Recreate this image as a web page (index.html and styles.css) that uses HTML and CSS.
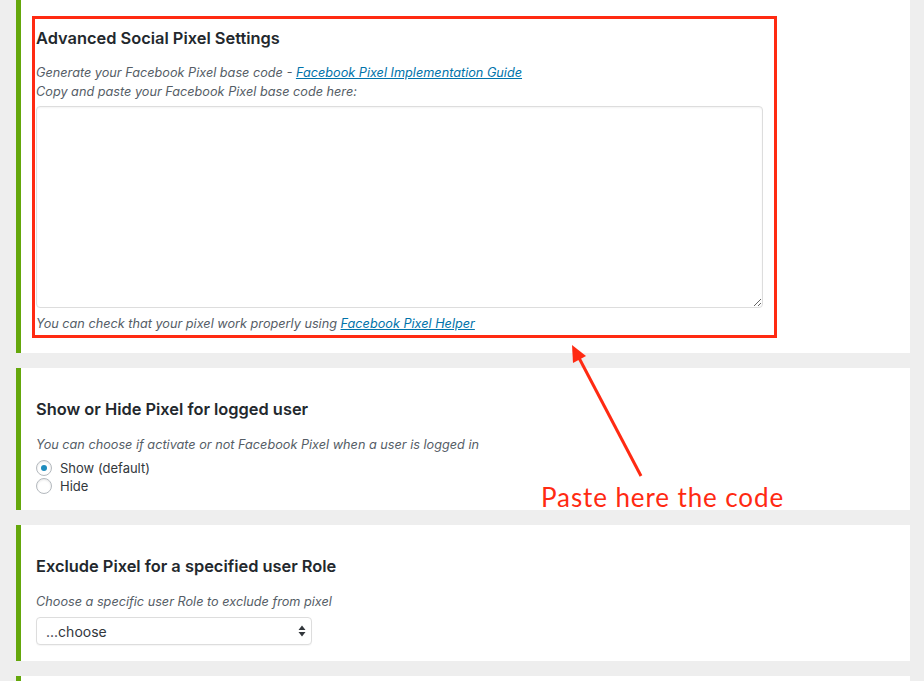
FILE: index.html
```html
<!DOCTYPE html>
<html>
<head>
<meta charset="utf-8">
<link rel="stylesheet" href="styles.css">
</head>
<body>
<div class="page">
  <section class="card card-first">
    <div class="highlight">
      <h2 class="title title-first">Advanced Social Pixel Settings</h2>
      <p class="desc desc-first">Generate your Facebook Pixel base code - <a href="#">Facebook Pixel Implementation Guide</a><br>Copy and paste your Facebook Pixel base code here:</p>
      <textarea class="code"></textarea>
      <p class="desc desc-foot">You can check that your pixel work properly using <a href="#">Facebook Pixel Helper</a></p>
    </div>
  </section>

  <section class="card">
    <h2 class="title">Show or Hide Pixel for logged user</h2>
    <p class="desc">You can choose if activate or not Facebook Pixel when a user is logged in</p>
    <div class="radios">
      <label class="radio"><span class="dot checked"></span>Show (default)</label>
      <label class="radio"><span class="dot"></span>Hide</label>
    </div>
  </section>

  <section class="card card-select">
    <h2 class="title">Exclude Pixel for a specified user Role</h2>
    <p class="desc">Choose a specific user Role to exclude from pixel</p>
    <div class="select-wrap">
      <select class="select"><option>...choose</option></select>
      <svg class="select-arrows" width="8" height="12" viewBox="0 0 8 12"><path d="M4 0.5 L7.5 5 L0.5 5 Z M4 11.5 L7.5 7 L0.5 7 Z" fill="#32373c"/></svg>
    </div>
  </section>

  <section class="card card-last"></section>

  <svg class="annot" width="924" height="681" viewBox="0 0 924 681">
    <line x1="641" y1="476" x2="578" y2="356" stroke="#ff2a12" stroke-width="3"/>
    <polygon points="572,345 586,356 573,363" fill="#ff2a12"/>
  </svg>
  <div class="annot-text">Paste here the code</div>
</div>
</body>
</html>
```

FILE: styles.css
```css
html, body {
  margin: 0;
  padding: 0;
  background: #eeeeee;
  height: 681px;
  overflow: hidden;
}
.page {
  position: relative;
  padding-left: 16px;
  width: 894px;
  font-family: Inter, "Noto Sans", sans-serif;
  color: #23282d;
}
.card {
  background: #fff;
  border-left: 5px solid #64a70b;
  padding: 30px 16px 15px 15px;
  margin-bottom: 15px;
  box-sizing: border-box;
}
.card-first {
  padding: 16px 16px 15px 11px;
}
.card-select {
  padding-bottom: 16px;
}
.card-last {
  height: 40px;
  margin-bottom: 0;
}
.highlight {
  width: 738px;
  border: 3px solid #ff2a12;
  padding: 0 0 2px 1px;
}
.title {
  margin: 0;
  font-size: 16.4px;
  line-height: 22px;
  font-weight: 600;
  color: #23282d;
}
.title-first {
  margin-top: 8px;
}
.desc {
  margin: 15px 0 0 0;
  font-size: 12.7px;
  line-height: 19px;
  font-style: italic;
  color: #555d66;
}
.desc-first {
  margin-top: 14px;
}
.desc a {
  color: #0073aa;
}
.code {
  display: block;
  margin: 5px 0 0 0;
  width: 727px;
  height: 202px;
  box-sizing: border-box;
  border: 1px solid #dddddd;
  border-radius: 4px;
  box-shadow: inset 0 1px 2px rgba(0,0,0,0.05);
  background: #fff;
  padding: 4px;
}
.desc-foot {
  margin-top: 6px;
}
.radios {
  margin-top: 5px;
  display: flex;
  flex-direction: column;
}
.radio {
  display: flex;
  align-items: center;
  height: 18px;
  font-size: 13px;
  color: #32373c;
}
.dot {
  width: 16px;
  height: 16px;
  box-sizing: border-box;
  border: 1px solid #b4b9be;
  border-radius: 50%;
  margin-right: 8px;
  box-shadow: inset 0 1px 2px rgba(0,0,0,0.1);
  display: flex;
  align-items: center;
  justify-content: center;
}
.dot.checked::after {
  content: "";
  width: 6px;
  height: 6px;
  border-radius: 50%;
  background: #1e8cbe;
}
.select-wrap {
  position: relative;
  margin-top: 6px;
  width: 276px;
}
.select {
  display: block;
  width: 276px;
  height: 28px;
  -webkit-appearance: none;
  appearance: none;
  border: 1px solid #dddddd;
  border-radius: 4px;
  background: #fff;
  box-shadow: 0 1px 1px rgba(0,0,0,0.04);
  padding: 0 9px;
  font-family: Inter, "Noto Sans", sans-serif;
  font-size: 14px;
  color: #32373c;
}
.select-arrows {
  position: absolute;
  right: 6px;
  top: 8px;
}
.annot {
  position: absolute;
  left: 0;
  top: 0;
  pointer-events: none;
}
.annot-text {
  position: absolute;
  left: 541px;
  top: 481px;
  font-family: Lato, sans-serif;
  font-size: 26px;
  letter-spacing: 0.9px;
  line-height: 32px;
  color: #ff2a12;
  white-space: nowrap;
}
```
